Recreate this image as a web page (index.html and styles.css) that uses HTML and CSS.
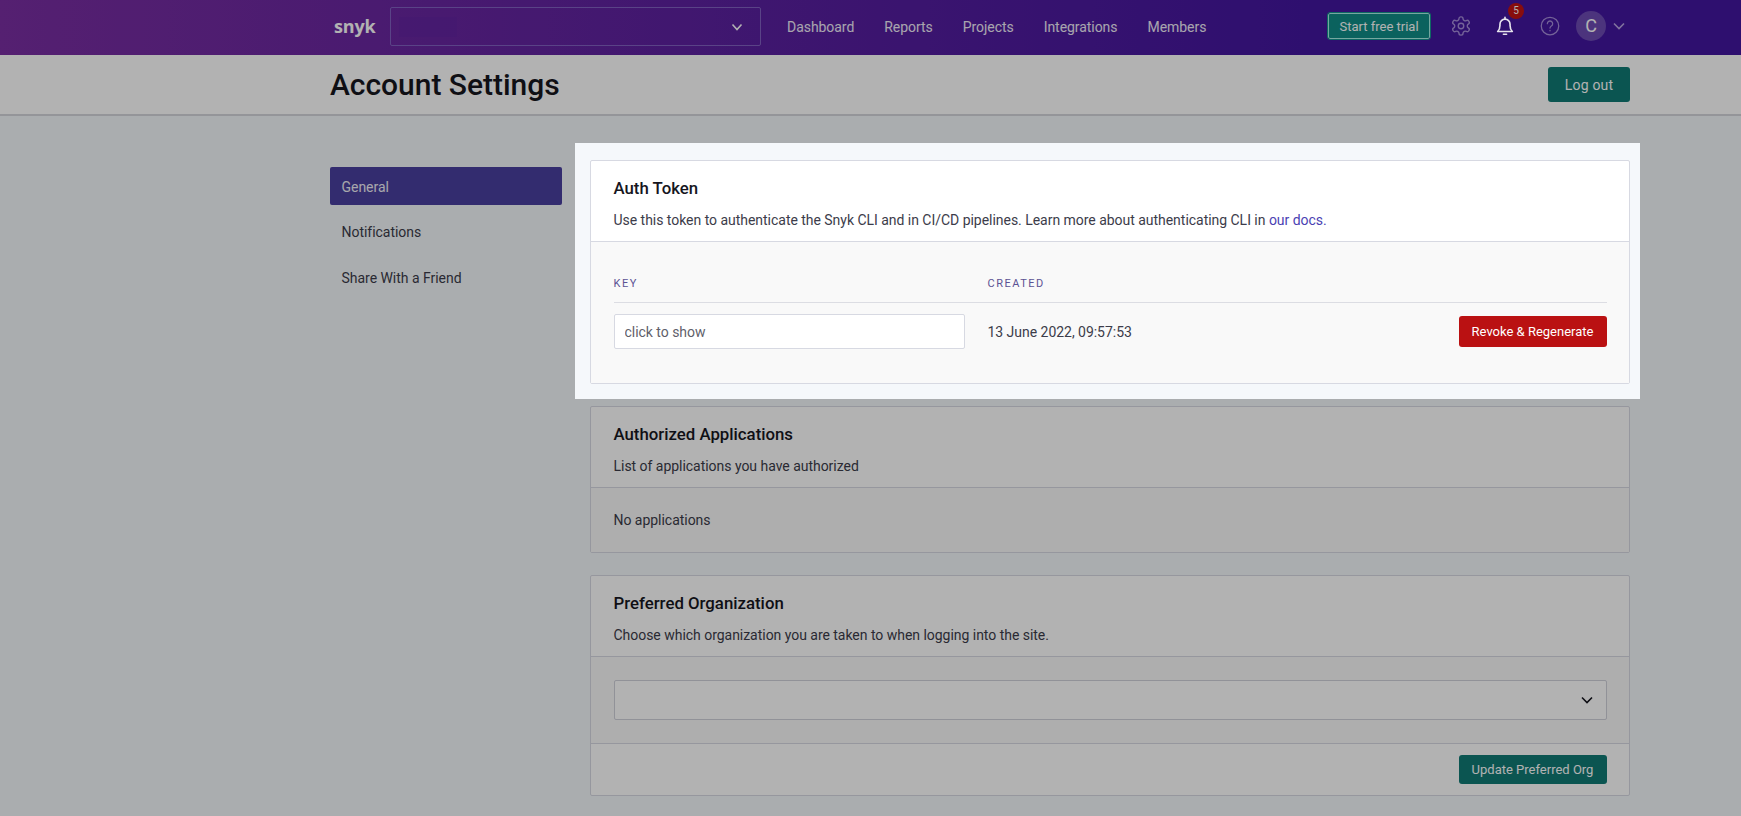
FILE: index.html
```html
<!DOCTYPE html>
<html lang="en">

<head>
  <meta charset="UTF-8">
  <meta name="viewport" content="width=device-width, initial-scale=1.0">
  <title>Account Settings - Snyk</title>
  <link rel="stylesheet" href="styles.css">
</head>

<body>

  <header class="topbar">
    <span class="logo">snyk</span>
    <div class="org-select">
      <span class="org-name"></span>
      <svg class="chevron" width="14" height="14" viewBox="0 0 14 14"><path d="M2.5 4.5 7 9.500l4.500-5"/></svg>
    </div>
    <nav class="topnav">
      <a href="#">Dashboard</a>
      <a href="#">Reports</a>
      <a href="#">Projects</a>
      <a href="#">Integrations</a>
      <a href="#">Members</a>
    </nav>
    <div class="topbar-actions">
      <button class="trial-btn">Start free trial</button>
      <svg class="icon gear" width="22" height="22" viewBox="0 0 24 24">
        <path d="M12.22 2h-.44a2 2 0 0 0-2 2v.18a2 2 0 0 1-1 1.73l-.43.25a2 2 0 0 1-2 0l-.15-.08a2 2 0 0 0-2.73.73l-.22.38a2 2 0 0 0 .73 2.73l.15.1a2 2 0 0 1 1 1.72v.51a2 2 0 0 1-1 1.74l-.15.09a2 2 0 0 0-.73 2.73l.22.38a2 2 0 0 0 2.73.73l.15-.08a2 2 0 0 1 2 0l.43.25a2 2 0 0 1 1 1.73V20a2 2 0 0 0 2 2h.44a2 2 0 0 0 2-2v-.18a2 2 0 0 1 1-1.73l.43-.25a2 2 0 0 1 2 0l.15.08a2 2 0 0 0 2.73-.73l.22-.39a2 2 0 0 0-.73-2.73l-.15-.08a2 2 0 0 1-1-1.74v-.5a2 2 0 0 1 1-1.74l.15-.09a2 2 0 0 0 .73-2.73l-.22-.38a2 2 0 0 0-2.73-.73l-.15.08a2 2 0 0 1-2 0l-.43-.25a2 2 0 0 1-1-1.73V4a2 2 0 0 0-2-2z"/>
        <circle cx="12" cy="12" r="3"/>
      </svg>
      <div class="bell-wrap">
        <svg class="icon bell" width="22" height="22" viewBox="0 0 24 24">
          <path d="M4 18h16c-1.700-1.600-2.500-3-2.500-6.500V10a5.500 5.500 0 0 0-11 0v1.500C6.500 15 5.700 16.400 4 18z"/>
          <path d="M12 2.500v2M10.300 21h3.400"/>
        </svg>
        <span class="badge">5</span>
      </div>
      <svg class="icon help" width="20" height="20" viewBox="0 0 24 24">
        <circle cx="12" cy="12" r="10.500"/>
        <path d="M8.800 9.200a3.200 3.200 0 1 1 4.800 2.800c-1 .6-1.600 1.200-1.600 2.400"/>
        <path d="M12 17.200v.6"/>
      </svg>
      <span class="avatar">C</span>
      <svg class="chevron avatar-chevron" width="14" height="14" viewBox="0 0 14 14"><path d="M2 4.500 7 9.500l5-5"/></svg>
    </div>
  </header>

  <div class="page-head">
    <h1>Account Settings</h1>
    <button class="btn btn-green btn-logout">Log out</button>
  </div>

  <main class="layout">
    <ul class="sidenav">
      <li class="active"><a href="#">General</a></li>
      <li><a href="#">Notifications</a></li>
      <li><a href="#">Share With a Friend</a></li>
    </ul>

    <div class="cards">
      <div class="highlight">
        <section class="card">
          <div class="card-head">
            <h2>Auth Token</h2>
            <p>Use this token to authenticate the Snyk CLI and in CI/CD pipelines. Learn more about authenticating CLI in <a href="#">our docs.</a></p>
          </div>
          <div class="card-body token-body">
            <div class="token-row token-labels">
              <span>Key</span>
              <span>Created</span>
            </div>
            <div class="token-row">
              <input class="token-input" type="text" placeholder="click to show">
              <span>13 June 2022, 09:57:53</span>
              <button class="btn btn-red">Revoke &amp; Regenerate</button>
            </div>
          </div>
        </section>
      </div>

      <section class="card">
        <div class="card-head">
          <h2>Authorized Applications</h2>
          <p>List of applications you have authorized</p>
        </div>
        <div class="card-body apps-body">No applications</div>
      </section>

      <section class="card">
        <div class="card-head">
          <h2>Preferred Organization</h2>
          <p>Choose which organization you are taken to when logging into the site.</p>
        </div>
        <div class="card-body org-body">
          <div class="org-field">
            <svg class="chevron" width="14" height="14" viewBox="0 0 14 14"><path d="M2 4.500 7 9.500l5-5"/></svg>
          </div>
        </div>
        <div class="card-foot">
          <button class="btn btn-green">Update Preferred Org</button>
        </div>
      </section>
    </div>
  </main>

  <div class="overlay"></div>

</body>

</html>
```

FILE: styles.css
```css
html, body {
  height: 816px;
  overflow: hidden;
}
body {
  font-family: Roboto, "Liberation Sans", sans-serif;
  font-size: 14px;
  line-height: 20px;
  letter-spacing: -0.03px;
  background-color: #f4f8fb;
  color: #3c3c4a;
  margin: 0;
}
a {
  text-decoration: none;
}
button {
  font-family: inherit;
  cursor: pointer;
}

/* top bar */
.topbar {
  height: 55px;
  box-sizing: border-box;
  display: flex;
  align-items: center;
  padding-left: 334px;
  background: linear-gradient(90deg, #7a2ea2 0%, #43169f 75%);
  color: #fff;
}
.logo {
  width: 56px;
  font-family: "Open Sans", sans-serif;
  font-size: 18px;
  font-weight: 700;
  letter-spacing: -0.2px;
  margin-top: -4px;
}
.org-select {
  width: 371px;
  height: 39px;
  box-sizing: border-box;
  display: flex;
  align-items: center;
  justify-content: space-between;
  padding: 0 16px 0 8px;
  margin-top: -2px;
  border: 1px solid #8261c2;
  border-radius: 2px;
}
.org-name {
  width: 58px;
  height: 20px;
  background-color: rgba(60, 10, 170, 0.08);
}
.chevron path {
  fill: none;
  stroke: currentColor;
  stroke-width: 1.600;
}
.topnav {
  display: flex;
  margin-left: 26px;
  margin-top: -2px;
}
.topnav a {
  color: #f1ecf9;
  margin-right: 30px;
  letter-spacing: -0.05px;
}
.topbar-actions {
  display: flex;
  align-items: center;
  margin-left: auto;
  margin-right: 115px;
  margin-top: -3px;
}
.trial-btn {
  width: 102px;
  height: 26px;
  padding: 0;
  font-size: 13px;
  color: #fff;
  background-color: #118d87;
  border: 1px solid #a8efe6;
  outline: 1px solid #15958e;
  border-radius: 2px;
}
.icon {
  fill: none;
  stroke: currentColor;
  stroke-width: 1.500;
  stroke-linecap: round;
  stroke-linejoin: round;
}
.gear {
  color: #a78fdb;
  margin-left: 20px;
}
.bell-wrap {
  position: relative;
  display: flex;
  margin-left: 22px;
}
.bell {
  position: relative;
  z-index: 10;
  color: #e6e4ec;
  stroke-width: 1.800;
}
.badge {
  position: absolute;
  top: -12px;
  left: 14px;
  width: 16px;
  height: 16px;
  border-radius: 50%;
  background-color: #c21414;
  font-size: 10px;
  line-height: 16px;
  text-align: center;
}
.help {
  color: #a78fdb;
  margin-left: 24px;
}
.avatar {
  width: 30px;
  height: 30px;
  border-radius: 50%;
  margin-left: 16px;
  background-color: #6d4bb4;
  font-size: 18px;
  line-height: 30px;
  text-align: center;
}
.avatar-chevron {
  color: #b7a4e2;
  margin-left: 6px;
}

/* page title */
.page-head {
  height: 61px;
  box-sizing: border-box;
  display: flex;
  align-items: center;
  justify-content: space-between;
  padding: 0 111px 0 330px;
  background-color: #fff;
  border-bottom: 2px solid #d4d6dc;
}
h1 {
  margin: 1px 0 0;
  font-size: 30px;
  line-height: 36px;
  font-weight: 500;
  color: #16161e;
}

/* buttons */
.btn {
  height: 29px;
  padding: 0;
  font-size: 13px;
  color: #fff;
  border: 0;
  border-radius: 3px;
}
.btn-green {
  width: 148px;
  background-color: #107a75;
}
.btn-logout {
  width: 82px;
  height: 35px;
  font-size: 14px;
  letter-spacing: 0.2px;
}
.btn-red {
  width: 148px;
  height: 31px;
  background-color: #ba1112;
}

/* layout */
.layout {
  display: flex;
  padding: 44px 111px 0 330px;
}
.sidenav {
  width: 232px;
  margin: 7px 28px 0 0;
  padding: 0;
  list-style: none;
}
.sidenav li {
  height: 38px;
  margin-bottom: 8px;
  border-radius: 2px;
}
.sidenav a {
  display: block;
  padding: 9px 11.500px;
  color: #3c3c4a;
}
.sidenav .active {
  background-color: #493fa0;
}
.sidenav .active a {
  padding-top: 10px;
  color: #f0eff6;
}
.cards {
  width: 1040px;
}

/* the token card stays lit above the overlay */
.highlight {
  position: relative;
  z-index: 10;
  margin: -17px -10px 7px -15px;
  padding: 17px 10px 15px 15px;
  background-color: #f5f8fb;
}
.card {
  background-color: #fff;
  border: 1px solid #d7d9e2;
  border-radius: 2px;
  margin-bottom: 22px;
}
.highlight .card {
  margin-bottom: 0;
}
.card-head {
  height: 80px;
  box-sizing: border-box;
  padding: 15px 22.500px 0;
}
h2 {
  margin: 0;
  font-size: 16.800px;
  line-height: 24px;
  font-weight: 500;
  letter-spacing: 0;
  color: #16161e;
}
.card-head p {
  margin: 10px 0 0;
}
.card-head a {
  color: #4b3fb3;
}
.card-body {
  background-color: #f9f9f9;
  border-top: 1px solid #d7d9e2;
}
.token-body {
  padding: 32px 22.500px 34px;
}
.token-row {
  display: grid;
  grid-template-columns: 374px 1fr auto;
  align-items: center;
}
.token-labels {
  padding-bottom: 8px;
  margin-bottom: 11px;
  border-bottom: 1px solid #dcdde3;
  font-size: 11px;
  letter-spacing: 1.500px;
  text-transform: uppercase;
  color: #5c5294;
}
.token-input {
  width: 351px;
  height: 35px;
  box-sizing: border-box;
  padding: 0 10px;
  font-family: inherit;
  font-size: 14px;
  letter-spacing: inherit;
  background-color: #fff;
  border: 1px solid #d7d9e2;
  border-radius: 2px;
}
.token-input::placeholder {
  color: #5f5f6b;
  opacity: 1;
}
.apps-body {
  padding: 22px 22.500px;
}
.org-body {
  padding: 23px 22.500px;
}
.org-field {
  height: 40px;
  box-sizing: border-box;
  display: flex;
  align-items: center;
  justify-content: flex-end;
  padding-right: 12px;
  background-color: #fff;
  border: 1px solid #d0d1da;
  border-radius: 2px;
  color: #16161e;
}
.card-foot {
  display: flex;
  justify-content: flex-end;
  padding: 11px 22.500px;
  border-top: 1px solid #d7d9e2;
}

.overlay {
  position: fixed;
  top: 0;
  left: 0;
  right: 0;
  bottom: 0;
  z-index: 5;
  background-color: rgba(0, 0, 0, 0.3);
}
```
